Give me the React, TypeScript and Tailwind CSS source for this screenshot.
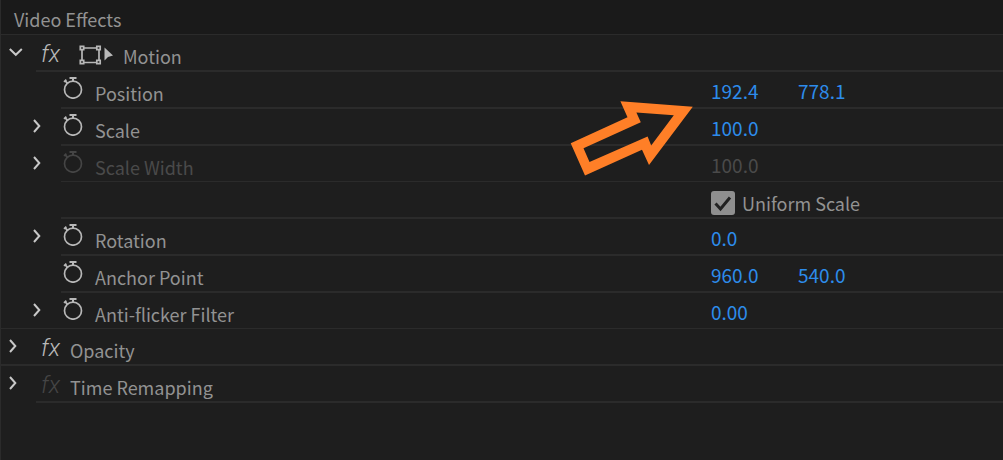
import type { ReactNode } from 'react'
import clsx from 'clsx'

interface Property {
  name: string;
  values: string[];
  expandable?: boolean;
  disabled?: boolean;
  line: string;
}

const THICK = 'h-[37px] border-b-2'
const THIN = 'h-9 border-b'

const transform: Property[] = [
  { name: 'Position', values: ['192.4', '778.1'], line: THICK },
  { name: 'Scale', values: ['100.0'], expandable: true, line: THICK },
  { name: 'Scale Width', values: ['100.0'], expandable: true, disabled: true, line: THIN },
]

const rest: Property[] = [
  { name: 'Rotation', values: ['0.0'], expandable: true, line: THICK },
  { name: 'Anchor Point', values: ['960.0', '540.0'], line: THICK },
]

const antiFlicker: Property = { name: 'Anti-flicker Filter', values: ['0.00'], expandable: true, line: THIN }

function Twisty({ label, open }: { label: string; open?: boolean }) {
  return (
    <button aria-label={`Toggle ${label}`} aria-expanded={!!open} className="block text-[#c8c8c8]">
      <svg width="14" height="14" viewBox="0 0 14 14" fill="none" stroke="currentColor" strokeWidth="2">
        {open ? <path d="M0.8 4 L6.8 9.8 L12.8 4" /> : <path d="M1 1 L6.3 7 L1 13" />}
      </svg>
    </button>
  )
}

function Stopwatch({ label, disabled }: { label: string; disabled?: boolean }) {
  return (
    <button
      aria-label={`Toggle animation for ${label}`}
      disabled={disabled}
      className={clsx('block', disabled ? 'text-[#454545]' : 'text-[#b8b8b8]')}
    >
      <svg width="20" height="22" viewBox="0 0 20 22" fill="none" stroke="currentColor">
        <circle cx="10" cy="12.7" r="8.5" strokeWidth="1.7" />
        <path d="M6.5 1h7M10 1v3.5" strokeWidth="2" />
        <path d="M1 4.9L3.4 2.8M2.2 3.8L4.8 6.6" strokeWidth="1.8" />
      </svg>
    </button>
  )
}

function Fx({ label, disabled }: { label: string; disabled?: boolean }) {
  return (
    <button
      aria-label={`Toggle effect ${label}`}
      className={clsx(
        'flex h-6 w-7 items-center font-[Roboto,sans-serif] text-2xl leading-6 font-light italic',
        disabled ? 'text-[#454545]' : 'text-[#b8b8b8]'
      )}
    >
      fx
    </button>
  )
}

function Arrow() {
  return (
    <svg
      width="124"
      height="76"
      viewBox="570 100 124 76"
      className="pointer-events-none absolute top-7 right-full mr-[17px]"
      aria-hidden="true"
    >
      <path
        fill="#ff7f27"
        fillRule="evenodd"
        d="M570.7 143.3L627.5 117.3L620.4 101.3L692.8 106.7L649 165L642 149.7L585 175.4Z M583.5 148.3L589.5 162L647.6 136.6L651.2 145.4L673.8 115.3L636.4 112.4L640.8 122.2Z"
      />
    </svg>
  )
}

function PropertyRow({ property, full, children }: { property: Property; full?: boolean; children?: ReactNode }) {
  const { name, values, expandable, disabled, line } = property
  return (
    <div className={clsx('flex border-[#2b2b2b]', line, full ? 'pl-[60px]' : 'ml-[60px]')}>
      <div className="flex min-w-0 flex-1">
        <div className="-ml-7 w-[30px] shrink-0 pt-[10px]">{expandable && <Twisty label={name} />}</div>
        <div className="w-8 shrink-0 pt-[5px]">
          <Stopwatch label={name} disabled={disabled} />
        </div>
        <div className={clsx('pt-[7px] leading-7 whitespace-nowrap', disabled && 'text-[#4a4a4a]')}>{name}</div>
      </div>
      <div className="relative flex w-[292px] shrink-0 pt-[5px]">
        {values.map((value, i) => (
          <input
            key={i}
            type="text"
            aria-label={values.length > 1 ? `${name} ${i === 0 ? 'X' : 'Y'}` : name}
            defaultValue={value}
            disabled={disabled}
            className={clsx(
              'h-7 w-[87px] bg-transparent text-[19px] leading-7 outline-none',
              disabled ? 'text-[#4a4a4a]' : 'text-[#2d8ceb]'
            )}
          />
        ))}
        {children}
      </div>
    </div>
  )
}

export default function App() {
  return (
    <main className="min-h-screen border-l border-[#2b2b2b] bg-[#1e1e1e] font-['Noto_Sans_CJK_SC',sans-serif] text-lg text-[#929292]">
      <h1 className="h-[35px] border-b border-[#2b2b2b] bg-[#1a1a1a] pt-[5px] pl-[13px] leading-7">Video Effects</h1>

      <section>
        <div className="flex h-[37px] pl-2">
          <div className="w-[27px] shrink-0 pt-[10px]">
            <Twisty label="Motion" open />
          </div>
          <div className="flex flex-1 border-b-2 border-[#2b2b2b] pl-[5px]">
            <div className="w-[38px] shrink-0 pt-[7px]">
              <Fx label="Motion" />
            </div>
            <button aria-label="Direct manipulation" className="mt-[10px] h-5 w-11 shrink-0 text-[#b8b8b8]">
              <svg width="34" height="20" viewBox="0 0 34 20" fill="none" stroke="currentColor" strokeWidth="1.7">
                <path d="M5 3h13M5 17.5h13M3 5v11M20 5v11" />
                <path d="M1.3 1.3h3.4v3.4h-3.4zM17.8 1.3h3.4v3.4h-3.4zM1.3 15.3h3.4v3.4h-3.4zM17.8 15.3h3.4v3.4h-3.4z" />
                <path d="M25.5 2.5v13l3.5-3.5l5-1.5z" fill="currentColor" stroke="none" />
              </svg>
            </button>
            <h2 className="pt-[7px] leading-7">Motion</h2>
          </div>
        </div>

        {transform.map((property, i) => (
          <PropertyRow key={property.name} property={property}>
            {i === 0 && <Arrow />}
          </PropertyRow>
        ))}

        <div className="ml-[60px] flex h-[37px] justify-end border-b-2 border-[#2b2b2b]">
          <div className="flex w-[292px] items-start">
            <span className="relative mt-[9px] mr-[7px] block size-6">
              <input
                id="uniform-scale"
                type="checkbox"
                defaultChecked
                className="peer block size-6 appearance-none rounded-[3px] bg-[#8f8f8f]"
              />
              <svg
                viewBox="0 0 24 24"
                fill="none"
                stroke="#222222"
                strokeWidth="3"
                className="pointer-events-none absolute inset-0 hidden size-6 peer-checked:block"
              >
                <path d="M4.5 12.5L9.5 18L19 6.5" />
              </svg>
            </span>
            <label htmlFor="uniform-scale" className="pt-[7px] leading-7">
              Uniform Scale
            </label>
          </div>
        </div>

        {rest.map((property) => (
          <PropertyRow key={property.name} property={property} />
        ))}
        <PropertyRow property={antiFlicker} full />
      </section>

      <section className="flex h-[37px] border-b-2 border-[#2b2b2b] pl-2">
        <div className="w-8 shrink-0 pt-[10px]">
          <Twisty label="Opacity" />
        </div>
        <div className="w-[29px] shrink-0 pt-[7px]">
          <Fx label="Opacity" />
        </div>
        <h2 className="pt-[7px] leading-7">Opacity</h2>
      </section>

      <section className="flex h-[37px] pl-2">
        <div className="w-[27px] shrink-0 pt-[10px]">
          <Twisty label="Time Remapping" />
        </div>
        <div className="flex flex-1 border-b-2 border-[#2b2b2b] pl-[5px]">
          <div className="w-[29px] shrink-0 pt-[7px]">
            <Fx label="Time Remapping" disabled />
          </div>
          <h2 className="pt-[7px] leading-7">Time Remapping</h2>
        </div>
      </section>
    </main>
  )
}
